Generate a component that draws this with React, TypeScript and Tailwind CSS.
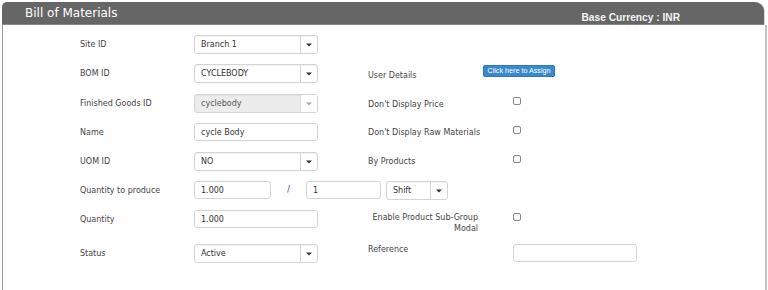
import React from "react";

const font = "font-['DejaVu_Sans','Verdana',sans-serif]";

function Caret({ muted }: { muted?: boolean }) {
    return <svg width="6" height="4" viewBox="0 0 6 4">
        <path d="M0 0.5h6L3 3.5z" fill={muted ? "#aaa" : "#333"} />
    </svg>
}

function Select({ value, wide = true, disabled }: { value: string, wide?: boolean, disabled?: boolean }) {
    return <div className={`flex h-[19px] rounded-[3px] border border-[#d4d4d4] shadow-[inset_0_1px_1px_rgba(0,0,0,0.05)] ${wide ? "w-[124px]" : "w-[62px]"} ${disabled ? "bg-[#ececec]" : "bg-white"}`}>
        <div className={`flex flex-1 items-center pl-[6px] pt-[1px] ${disabled ? "text-[#555]" : "text-[#333]"}`}>{value}</div>
        <div className={`flex w-[17px] items-center justify-center border-l ${disabled ? "border-[#e2e2e2] bg-white" : "border-[#d4d4d4]"}`}>
            <Caret muted={disabled} />
        </div>
    </div>
}

function TextInput({ value = "", width = "w-[124px]" }: { value?: string, width?: string }) {
    return <div className={`flex h-[18px] items-center rounded-[3px] border border-[#d4d4d4] bg-white pl-[6px] pt-[1px] text-[#333] ${width}`}>
        {value}
    </div>
}

function Check() {
    return <div className="mt-[3px] h-[8px] w-[8px] rounded-[2px] border border-[#888] bg-white"></div>
}

function Label({ children }: { children: React.ReactNode }) {
    return <div className="flex h-[19px] w-[114px] items-center pt-[1px] text-[#444]">{children}</div>
}

export default function App() {
    return <div className={`h-[290px] w-[768px] bg-white pt-[2px] pl-[2px] ${font}`}>
        <div className="flex h-[23px] w-[762px] justify-between rounded-tl-[5px] rounded-tr-[9px] border-b border-[#888] bg-[#666] pl-[23px] pr-[84px] shadow-[1px_0_1px_rgba(0,0,0,0.15)]">
            <div className="pt-[4px] text-[12px] leading-[14px] text-white">Bill of Materials</div>
            <div className="self-end font-['Liberation_Sans',Arial,sans-serif] text-[10.2px] font-bold leading-[12px] text-[#f4f4f4]">Base Currency : INR</div>
        </div>
        <div className="h-[265px] w-[765px] border-l border-r-2 border-l-[#9a9a9a] border-r-[#c4c4c4] pt-[10px] pl-[77px] text-[8px]">
            <div className="flex h-[29px]">
                <Label>Site ID</Label>
                <Select value="Branch 1" />
            </div>
            <div className="flex h-[30px]">
                <Label>BOM ID</Label>
                <Select value="CYCLEBODY" />
                <div className="ml-[50px] flex h-[19px] w-[115px] items-center pt-[4px] text-[#444]">User Details</div>
                <button className="mt-[1px] h-[12px] w-[72px] rounded-[2px] border border-[#2f78b8] bg-[#3a89cf] font-['Liberation_Sans',Arial,sans-serif] text-[7.2px] leading-[10px] text-white">Click here to Assign</button>
            </div>
            <div className="flex h-[29px]">
                <Label>Finished Goods ID</Label>
                <Select value="cyclebody" disabled />
                <div className="ml-[50px] flex h-[19px] w-[145px] items-center pt-[2px] text-[#444]">Don't Display Price</div>
                <Check />
            </div>
            <div className="flex h-[29px]">
                <Label>Name</Label>
                <TextInput value="cycle Body" />
                <div className="ml-[50px] flex h-[17px] w-[145px] items-center pt-[2px] text-[#444]">Don't Display Raw Materials</div>
                <Check />
            </div>
            <div className="flex h-[29px]">
                <Label>UOM ID</Label>
                <Select value="NO" />
                <div className="ml-[50px] flex h-[17px] w-[145px] items-center pt-[2px] text-[#444]">By Products</div>
                <Check />
            </div>
            <div className="flex h-[29px]">
                <Label>Quantity to produce</Label>
                <TextInput value="1.000" width="w-[77px]" />
                <div className="flex h-[18px] w-[35px] items-center justify-center text-[#444]">/</div>
                <TextInput value="1" width="w-[75px]" />
                <div className="ml-[5px]">
                    <Select value="Shift" wide={false} />
                </div>
            </div>
            <div className="flex h-[34px]">
                <Label>Quantity</Label>
                <TextInput value="1.000" />
                <div className="ml-[50px] w-[110px] pt-[2px] text-right leading-[11px] text-[#444]">Enable Product Sub-Group Modal</div>
                <div className="ml-[35px]">
                    <Check />
                </div>
            </div>
            <div className="flex">
                <Label>Status</Label>
                <Select value="Active" />
                <div className="ml-[50px] w-[145px] pt-[1px] leading-[10px] text-[#444]">Reference</div>
                <TextInput width="w-[124px]" />
            </div>
        </div>
    </div>
}
